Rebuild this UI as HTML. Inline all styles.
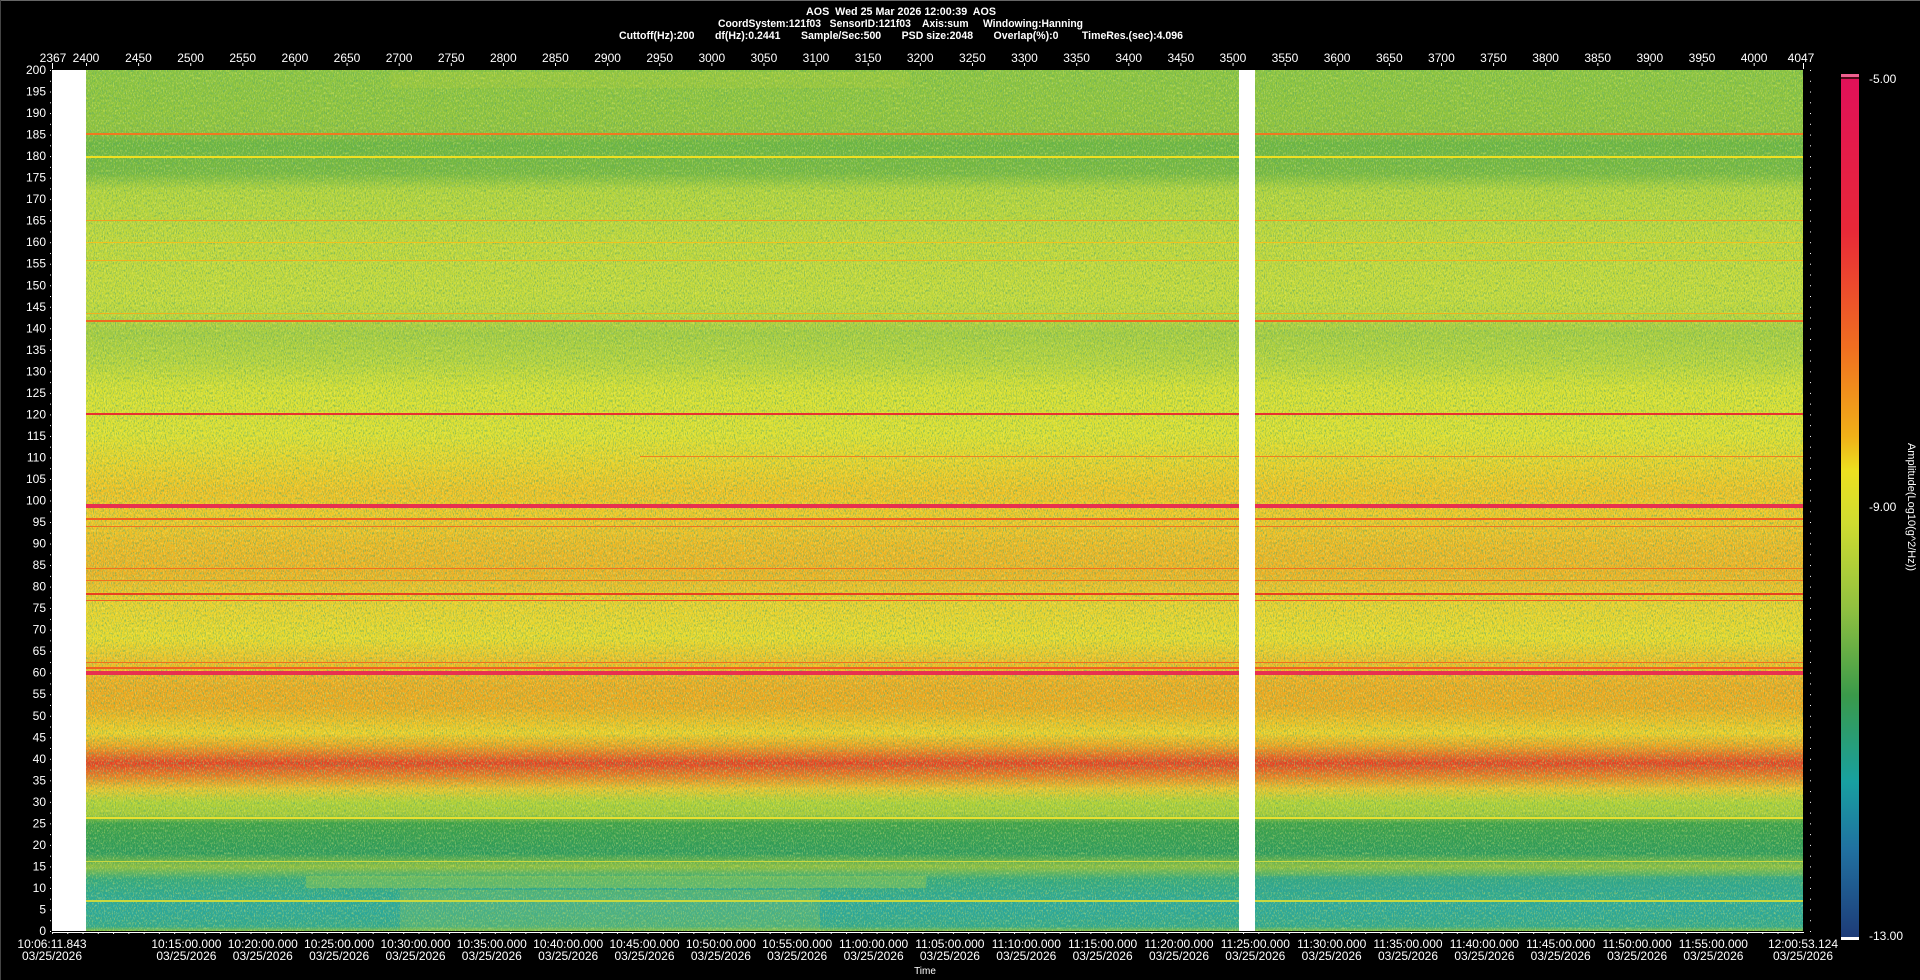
<!DOCTYPE html>
<html><head><meta charset="utf-8"><style>
html,body{margin:0;padding:0;background:#000;width:1920px;height:980px;overflow:hidden}
svg{display:block}
text{font-family:"Liberation Sans",sans-serif;fill:#fff;white-space:pre}
</style></head><body>
<svg width="1920" height="980" viewBox="0 0 1920 980" xmlns="http://www.w3.org/2000/svg">
<defs>
<linearGradient id="sg" x1="0" y1="0" x2="0" y2="1">
<stop offset="0" stop-color="#8cc440"/>
<stop offset="0.05" stop-color="#90c43c"/>
<stop offset="0.07" stop-color="#8fc23e"/>
<stop offset="0.085" stop-color="#6db640"/>
<stop offset="0.12" stop-color="#78b940"/>
<stop offset="0.14" stop-color="#b4d43c"/>
<stop offset="0.2" stop-color="#c2d83a"/>
<stop offset="0.265" stop-color="#c6da3a"/>
<stop offset="0.285" stop-color="#bcd63c"/>
<stop offset="0.305" stop-color="#a6cc40"/>
<stop offset="0.34" stop-color="#b8d43c"/>
<stop offset="0.37" stop-color="#d8e032"/>
<stop offset="0.425" stop-color="#e0e030"/>
<stop offset="0.46" stop-color="#ecd028"/>
<stop offset="0.49" stop-color="#f2c024"/>
<stop offset="0.52" stop-color="#f0c828"/>
<stop offset="0.55" stop-color="#f0b824"/>
<stop offset="0.585" stop-color="#f0b024"/>
<stop offset="0.62" stop-color="#ecd02c"/>
<stop offset="0.66" stop-color="#eada2c"/>
<stop offset="0.685" stop-color="#f0c028"/>
<stop offset="0.715" stop-color="#f0a820"/>
<stop offset="0.74" stop-color="#f0a81e"/>
<stop offset="0.77" stop-color="#f0d028"/>
<stop offset="0.785" stop-color="#f0a020"/>
<stop offset="0.805" stop-color="#e83c22"/>
<stop offset="0.82" stop-color="#ec7a22"/>
<stop offset="0.835" stop-color="#ecc42c"/>
<stop offset="0.85" stop-color="#b4d236"/>
<stop offset="0.865" stop-color="#a8cc38"/>
<stop offset="0.875" stop-color="#3aa048"/>
<stop offset="0.91" stop-color="#2c9a5c"/>
<stop offset="0.925" stop-color="#90c040"/>
<stop offset="0.94" stop-color="#30a880"/>
<stop offset="0.97" stop-color="#28a8a0"/>
<stop offset="0.995" stop-color="#30a890"/>
<stop offset="1" stop-color="#88c040"/>
</linearGradient>
<linearGradient id="cb" x1="0" y1="0" x2="0" y2="1">
<stop offset="0" stop-color="#e0105a"/>
<stop offset="0.18" stop-color="#e82838"/>
<stop offset="0.32" stop-color="#f07020"/>
<stop offset="0.42" stop-color="#f0b018"/>
<stop offset="0.46" stop-color="#ece020"/>
<stop offset="0.52" stop-color="#d0dc30"/>
<stop offset="0.62" stop-color="#90c040"/>
<stop offset="0.72" stop-color="#3a9a4a"/>
<stop offset="0.82" stop-color="#18a0a0"/>
<stop offset="0.9" stop-color="#2070a0"/>
<stop offset="1" stop-color="#1e3c78"/>
</linearGradient>
<filter id="nz" x="0" y="0" width="100%" height="100%">
<feTurbulence type="fractalNoise" baseFrequency="0.9 0.4" numOctaves="2" seed="4"/>
<feColorMatrix type="matrix" values="0 0 0 0 0.1  0 0 0 0 0.4  0 0 0 0 0.15  4 0 0 0 -1.9"/>
</filter>
<filter id="nz2" x="0" y="0" width="100%" height="100%">
<feTurbulence type="fractalNoise" baseFrequency="0.9 0.4" numOctaves="2" seed="11"/>
<feColorMatrix type="matrix" values="0 0 0 0 1  0 0 0 0 0.95  0 0 0 0 0.2  4 0 0 0 -2.0"/>
</filter>
<pattern id="tx" x="55.1" y="0" width="10.423" height="10" patternUnits="userSpaceOnUse"><rect x="0" y="0" width="1" height="3" fill="#fff"/></pattern>
<pattern id="txm" x="86" y="0" width="52.115" height="10" patternUnits="userSpaceOnUse"><rect x="0" y="0" width="1" height="6" fill="#fff"/></pattern>
<pattern id="bx" x="49" y="0" width="15.27" height="10" patternUnits="userSpaceOnUse"><rect x="3" y="0" width="1" height="4" fill="#fff"/></pattern>
<pattern id="ly" x="0" y="70" width="10" height="10.7625" patternUnits="userSpaceOnUse"><rect x="0" y="0" width="4" height="1" fill="#fff"/></pattern>
</defs>
<rect x="0" y="0" width="1920" height="1" fill="#666"/>
<rect x="0" y="0" width="1" height="980" fill="#444"/>

<!-- header -->
<text x="901" y="15" font-size="11" font-weight="bold" text-anchor="middle" textLength="190" lengthAdjust="spacingAndGlyphs">AOS  Wed 25 Mar 2026 12:00:39  AOS</text>
<text x="718" y="27" font-size="11" font-weight="bold" textLength="365" lengthAdjust="spacingAndGlyphs">CoordSystem:121f03   SensorID:121f03    Axis:sum     Windowing:Hanning</text>
<text x="619" y="39" font-size="11" font-weight="bold" textLength="564" lengthAdjust="spacingAndGlyphs">Cuttoff(Hz):200       df(Hz):0.2441       Sample/Sec:500       PSD size:2048       Overlap(%):0        TimeRes.(sec):4.096</text>

<!-- top labels -->
<g font-size="12" text-anchor="middle">
<text x="53" y="62">2367</text><text x="86" y="62">2400</text><text x="138.5" y="62">2450</text><text x="190.6" y="62">2500</text><text x="242.7" y="62">2550</text><text x="294.9" y="62">2600</text><text x="347" y="62">2650</text><text x="399.1" y="62">2700</text><text x="451.2" y="62">2750</text><text x="503.3" y="62">2800</text><text x="555.4" y="62">2850</text><text x="607.6" y="62">2900</text><text x="659.7" y="62">2950</text><text x="711.8" y="62">3000</text><text x="763.9" y="62">3050</text><text x="816" y="62">3100</text><text x="868.1" y="62">3150</text><text x="920.2" y="62">3200</text><text x="972.4" y="62">3250</text><text x="1024.5" y="62">3300</text><text x="1076.6" y="62">3350</text><text x="1128.7" y="62">3400</text><text x="1180.8" y="62">3450</text><text x="1232.9" y="62">3500</text><text x="1285" y="62">3550</text><text x="1337.1" y="62">3600</text><text x="1389.3" y="62">3650</text><text x="1441.4" y="62">3700</text><text x="1493.5" y="62">3750</text><text x="1545.6" y="62">3800</text><text x="1597.7" y="62">3850</text><text x="1649.8" y="62">3900</text><text x="1702" y="62">3950</text><text x="1754.1" y="62">4000</text><text x="1801" y="62">4047</text>
</g>
<rect x="52" y="66" width="1752" height="3" fill="url(#tx)"/>
<rect x="52" y="63" width="1752" height="6" fill="url(#txm)"/>
<rect x="52" y="63" width="1" height="6" fill="#fff"/><rect x="1803" y="63" width="1" height="6" fill="#fff"/>

<!-- y labels -->
<g font-size="12" text-anchor="end">
<text x="46" y="74">200</text><text x="46" y="95.5">195</text><text x="46" y="117">190</text><text x="46" y="138.6">185</text><text x="46" y="160">180</text><text x="46" y="181.6">175</text><text x="46" y="203.2">170</text><text x="46" y="224.7">165</text><text x="46" y="246.2">160</text><text x="46" y="267.7">155</text><text x="46" y="289.3">150</text><text x="46" y="310.8">145</text><text x="46" y="332.3">140</text><text x="46" y="353.8">135</text><text x="46" y="375.4">130</text><text x="46" y="396.9">125</text><text x="46" y="418.4">120</text><text x="46" y="439.9">115</text><text x="46" y="461.5">110</text><text x="46" y="483">105</text><text x="46" y="504.5">100</text><text x="46" y="526">95</text><text x="46" y="547.6">90</text><text x="46" y="569.1">85</text><text x="46" y="590.6">80</text><text x="46" y="612.1">75</text><text x="46" y="633.7">70</text><text x="46" y="655.2">65</text><text x="46" y="676.7">60</text><text x="46" y="698.2">55</text><text x="46" y="719.8">50</text><text x="46" y="741.3">45</text><text x="46" y="762.8">40</text><text x="46" y="784.3">35</text><text x="46" y="805.9">30</text><text x="46" y="827.4">25</text><text x="46" y="848.9">20</text><text x="46" y="870.4">15</text><text x="46" y="892">10</text><text x="46" y="913.5">5</text><text x="46" y="935">0</text>
</g>
<rect x="47" y="70" width="4" height="862" fill="url(#ly)"/>
<rect x="1806" y="70" width="5" height="862" fill="url(#ly)"/>

<!-- spectrogram -->
<rect x="52" y="70" width="34" height="861" fill="#fff"/>
<rect x="86" y="70" width="1717" height="861" fill="url(#sg)"/>
<rect x="86" y="70" width="1717" height="861" filter="url(#nz)" opacity="0.6"/>
<rect x="86" y="70" width="1717" height="861" filter="url(#nz2)" opacity="0.35"/>
<!-- features -->
<rect x="390" y="72" width="520" height="16" fill="#e8e030" opacity="0.12"/>
<rect x="306" y="876" width="620" height="12" fill="#c8dc38" opacity="0.3"/>
<rect x="400" y="890" width="420" height="40" fill="#c8d838" opacity="0.18"/>
<rect x="1240" y="876" width="560" height="16" fill="#28a0b0" opacity="0.2"/>
<g>
<rect x="86" y="133" width="1717" height="2" fill="#f07820"/>
<rect x="86" y="156" width="1717" height="2" fill="#f0e020"/>
<rect x="86" y="220" width="1717" height="1" fill="#f0a020"/>
<rect x="86" y="242" width="1717" height="1" fill="#f0c020"/>
<rect x="86" y="260" width="1717" height="1" fill="#f0b020"/>
<rect x="86" y="313" width="1717" height="1" fill="#f0b020"/>
<rect x="86" y="320" width="1717" height="2" fill="#f06a20"/>
<rect x="86" y="413" width="1717" height="2" fill="#e83030"/>
<rect x="640" y="456" width="1163" height="1" fill="#f08020"/>
<rect x="86" y="504" width="1717" height="4" fill="#e83050"/>
<rect x="86" y="518" width="1717" height="2" fill="#f06020"/>
<rect x="86" y="526" width="1717" height="1" fill="#f07020"/>
<rect x="86" y="568" width="1717" height="1" fill="#f07020"/>
<rect x="86" y="580" width="1717" height="1" fill="#f07020"/>
<rect x="86" y="593" width="1717" height="2" fill="#e84020"/>
<rect x="86" y="600" width="1717" height="1" fill="#f06020"/>
<rect x="86" y="662" width="1717" height="1" fill="#f07020"/>
<rect x="86" y="667" width="1717" height="2" fill="#f06020"/>
<rect x="86" y="671" width="1717" height="4" fill="#e83050"/>
<rect x="86" y="817" width="1717" height="2" fill="#e8e030"/>
<rect x="86" y="861" width="1717" height="1" fill="#c8d840"/>
<rect x="86" y="900" width="1717" height="2" fill="#c8d840"/>
</g>
<rect x="1239" y="70" width="16" height="861" fill="#fff"/>

<!-- bottom ticks -->
<rect x="52" y="932" width="1752" height="4" fill="url(#bx)"/>
<rect x="52" y="932" width="1752" height="1" fill="#fff"/>

<!-- time labels -->
<g font-size="12" text-anchor="middle">
<text x="52" y="948">10:06:11.843</text><text x="52" y="960">03/25/2026</text>
<text x="186.4" y="948">10:15:00.000</text><text x="186.4" y="960">03/25/2026</text>
<text x="262.8" y="948">10:20:00.000</text><text x="262.8" y="960">03/25/2026</text>
<text x="339.1" y="948">10:25:00.000</text><text x="339.1" y="960">03/25/2026</text>
<text x="415.5" y="948">10:30:00.000</text><text x="415.5" y="960">03/25/2026</text>
<text x="491.8" y="948">10:35:00.000</text><text x="491.8" y="960">03/25/2026</text>
<text x="568.2" y="948">10:40:00.000</text><text x="568.2" y="960">03/25/2026</text>
<text x="644.5" y="948">10:45:00.000</text><text x="644.5" y="960">03/25/2026</text>
<text x="720.9" y="948">10:50:00.000</text><text x="720.9" y="960">03/25/2026</text>
<text x="797.2" y="948">10:55:00.000</text><text x="797.2" y="960">03/25/2026</text>
<text x="873.6" y="948">11:00:00.000</text><text x="873.6" y="960">03/25/2026</text>
<text x="949.9" y="948">11:05:00.000</text><text x="949.9" y="960">03/25/2026</text>
<text x="1026.3" y="948">11:10:00.000</text><text x="1026.3" y="960">03/25/2026</text>
<text x="1102.6" y="948">11:15:00.000</text><text x="1102.6" y="960">03/25/2026</text>
<text x="1179" y="948">11:20:00.000</text><text x="1179" y="960">03/25/2026</text>
<text x="1255.3" y="948">11:25:00.000</text><text x="1255.3" y="960">03/25/2026</text>
<text x="1331.7" y="948">11:30:00.000</text><text x="1331.7" y="960">03/25/2026</text>
<text x="1408" y="948">11:35:00.000</text><text x="1408" y="960">03/25/2026</text>
<text x="1484.4" y="948">11:40:00.000</text><text x="1484.4" y="960">03/25/2026</text>
<text x="1560.7" y="948">11:45:00.000</text><text x="1560.7" y="960">03/25/2026</text>
<text x="1637.1" y="948">11:50:00.000</text><text x="1637.1" y="960">03/25/2026</text>
<text x="1713.4" y="948">11:55:00.000</text><text x="1713.4" y="960">03/25/2026</text>
<text x="1803" y="948">12:00:53.124</text><text x="1803" y="960">03/25/2026</text>
<text x="925" y="974" font-size="10">Time</text>
</g>

<!-- colorbar -->
<rect x="1841" y="74" width="18" height="863" fill="url(#cb)"/>
<rect x="1841" y="74" width="18" height="3" fill="#f06090"/>
<rect x="1841" y="77" width="18" height="2" fill="#500818"/>
<rect x="1841" y="937" width="18" height="3" fill="#fff"/>
<g font-size="12">
<text x="1869" y="83">-5.00</text>
<text x="1869" y="511">-9.00</text>
<text x="1869" y="940">-13.00</text>
</g>
<text x="0" y="0" font-size="11" text-anchor="middle" transform="translate(1908,507) rotate(90)">Amplitude(Log10(g^2/Hz))</text>
</svg>
</body></html>
